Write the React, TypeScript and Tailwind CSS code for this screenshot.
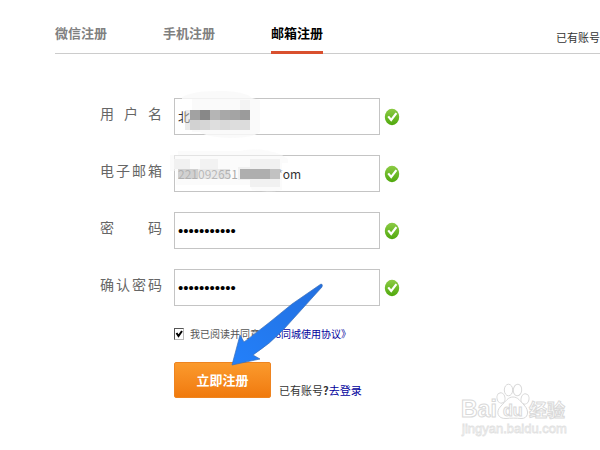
import type { ReactNode } from "react"

const tabs = [
  { label: "微信注册", active: false },
  { label: "手机注册", active: false },
  { label: "邮箱注册", active: true },
]

function CheckIcon() {
  return (
    <svg viewBox="0 0 16 18" className="h-[18px] w-4 shrink-0" aria-hidden="true">
      <defs>
        <linearGradient id="ok" x1="0" y1="0" x2="0" y2="1">
          <stop offset="0" stopColor="#8ccb45" />
          <stop offset="1" stopColor="#4fa80c" />
        </linearGradient>
      </defs>
      <ellipse cx="8" cy="9" rx="7.2" ry="8.2" fill="url(#ok)" />
      <path
        d="M4.2 8.4 L7.2 12 L12.4 5.2"
        fill="none"
        stroke="#fff"
        strokeWidth="2.2"
      />
    </svg>
  )
}

function NameMosaic() {
  const top = ["#a2a2a2", "#888888", "#b5b5b5", "#a8a8a8", "#a4a4a4", "#9b9b9b"]
  const bottom = ["#d2d2d2", "#d6d6d6", "#dedede", "#d9d9d9", "#dddddd", "#dcdcdc"]
  return (
    <svg
      viewBox="0 0 100 52"
      className="pointer-events-none absolute -top-2 left-0 h-[52px] w-[100px]"
      aria-hidden="true"
    >
      <path
        d="M8 7 Q20 0 50 1 Q72 2 78 8 L86 10 V42 Q80 48 56 48 Q32 47 26 42 H18 V9 H8 Z"
        fill="#f9f9f9"
        fillOpacity="0.85"
      />
      <rect x="66" y="10" width="10" height="10" fill="#f3f3f3" />
      {top.map((color, i) => (
        <rect key={i} x={16 + i * 10} y="20" width="10" height="10" fill={color} />
      ))}
      {bottom.map((color, i) => (
        <rect key={i} x={16 + i * 10} y="30" width="10" height="10" fill={color} />
      ))}
      <rect x="11" y="20" width="5" height="20" fill="#d8d8d8" fillOpacity="0.5" />
    </svg>
  )
}

function MailMosaic() {
  return (
    <svg
      viewBox="0 0 130 50"
      className="pointer-events-none absolute -top-2 -left-1 h-[50px] w-[130px]"
      aria-hidden="true"
    >
      <path
        d="M0 8 H8 V4 H70 Q90 -1 112 8 L118 12 V16 H112 V43 Q98 46 82 43 L80 38 H6 V24 H0 Z"
        fill="#f8f8f8"
        fillOpacity="0.6"
      />
      <rect x="4" y="12" width="16" height="10" fill="#f1f1f1" />
      <rect x="30" y="12" width="18" height="10" fill="#f2f2f2" />
      <rect x="80" y="12" width="30" height="28" fill="#f1f1f1" />
      <rect x="8" y="22" width="20" height="10" fill="#b5b5b5" fillOpacity="0.6" />
      <rect x="28" y="22" width="22" height="10" fill="#d0d0d0" fillOpacity="0.4" />
      <rect x="50" y="22" width="10" height="10" fill="#bbbbbb" fillOpacity="0.4" />
      <rect x="68" y="20" width="42" height="13" fill="#f1f1f1" />
      <rect x="70" y="22" width="30" height="10" fill="#aeaeae" />
      <rect x="100" y="22" width="10" height="10" fill="#c2c2c2" />
    </svg>
  )
}

type FieldProps = {
  id: string
  label: string
  type?: string
  value: string
  children?: ReactNode
}

function Field({ id, label, type = "text", value, children }: FieldProps) {
  return (
    <div className="flex items-center">
      <label
        htmlFor={id}
        className="mr-3 mb-2 w-[62px] text-justify text-sm text-[#666] [text-align-last:justify]"
      >
        {label}
      </label>
      <div className="relative w-[206px]">
        <input
          id={id}
          type={type}
          defaultValue={value}
          className={
            type === "password"
              ? "block h-[37px] w-full border border-[#c4c4c4] bg-white px-[3px] font-['Liberation_Sans',sans-serif] text-[15px] text-black outline-none"
              : "block h-[37px] w-full border border-[#c4c4c4] bg-white px-[3px] text-xs text-[#333] outline-none"
          }
        />
        {children}
      </div>
      <div className="ml-1">
        <CheckIcon />
      </div>
    </div>
  )
}

function Arrow() {
  return (
    <svg
      viewBox="0 0 96 86"
      className="pointer-events-none absolute -top-6 left-14 h-[86px] w-24"
      aria-hidden="true"
    >
      <defs>
        <linearGradient id="arrow" x1="0" y1="1" x2="1" y2="0">
          <stop offset="0" stopColor="#2380fa" />
          <stop offset="1" stopColor="#2370e0" />
        </linearGradient>
      </defs>
      <path
        d="M91 2 Q93 2 92 5 L54 47 Q40 62 23 73 L30 77 L2 83 L10 53 L14 60 Q38 42 62 22 Z"
        fill="url(#arrow)"
        stroke="#3b6fb8"
        strokeWidth="0.7"
      />
    </svg>
  )
}

function Watermark() {
  return (
    <svg
      viewBox="0 0 112 60"
      className="h-[60px] w-28 font-['Liberation_Sans','Noto_Sans_CJK_SC',sans-serif]"
      role="img"
      aria-label="Baidu 经验"
    >
      <g fill="#fff" stroke="#d9d9d9" strokeWidth="1">
        <text x="1" y="35" fontSize="23" fontWeight="700">
          Bai
        </text>
        <ellipse cx="41" cy="16" rx="4" ry="5.2" transform="rotate(-12 41 16)" />
        <ellipse cx="48.5" cy="8" rx="4.2" ry="5.8" />
        <ellipse cx="57.5" cy="8" rx="4.2" ry="5.8" transform="rotate(6 57.5 8)" />
        <ellipse cx="65" cy="17" rx="4" ry="5.2" transform="rotate(12 65 17)" />
        <path d="M53 15 C58 15 60 19 64 23 C70 29 68 37 61 36.500 C57 36 50 36 46 36.500 C38 37 35 30 41 24 C46 19 48 15 53 15 Z" />
        <text x="43" y="34" fontSize="16" fontWeight="700">
          du
        </text>
        <text x="69" y="35" fontSize="18" fontWeight="700">
          经验
        </text>
      </g>
      <text
        x="2"
        y="51"
        fontSize="13"
        fill="#fff"
        stroke="#e2e2e2"
        strokeWidth="0.8"
      >
        jingyan.baidu.com
      </text>
    </svg>
  )
}

export default function App() {
  return (
    <div className="min-h-screen overflow-hidden bg-white font-['Noto_Sans_CJK_SC',sans-serif]">
      <header className="ml-[55px] flex items-end justify-between border-b border-[#ccc] pt-[23px]">
        <nav className="flex gap-14">
          {tabs.map((tab) => (
            <a
              key={tab.label}
              href="#"
              className={
                tab.active
                  ? "-mb-px border-b-3 border-[#d9502f] pb-2 text-[13px] leading-5 font-bold text-black"
                  : "-mb-px border-b-3 border-transparent pb-2 text-[13px] leading-5 font-bold text-[#808080]"
              }
            >
              {tab.label}
            </a>
          ))}
        </nav>
        <span className="pb-2 text-[11px] leading-4 text-[#333]">已有账号</span>
      </header>

      <form className="pt-11 pl-[100px]" onSubmit={(e) => e.preventDefault()}>
        <div className="flex flex-col gap-5">
          <Field id="username" label="用户名" value="北">
            <NameMosaic />
          </Field>
          <Field id="email" label="电子邮箱" value="221092651********om">
            <MailMosaic />
          </Field>
          <Field id="password" label="密码" type="password" value="12345678901" />
          <Field id="confirm" label="确认密码" type="password" value="12345678901" />
        </div>

        <div className="relative ml-[74px]">
          <div className="flex items-center pt-5 text-[10px] leading-4">
            <span className="relative mr-1.5 flex">
              <input
                id="agree"
                type="checkbox"
                defaultChecked
                className="peer h-3 w-[10px] appearance-none border border-[#555] border-r-[#bbb] border-b-[#bbb] bg-white"
              />
              <svg
                viewBox="0 0 10 12"
                className="pointer-events-none absolute inset-0 hidden h-3 w-[10px] peer-checked:block"
                aria-hidden="true"
              >
                <path d="M2.5 5 L4.5 8 L8 3" fill="none" stroke="#000" strokeWidth="2" />
              </svg>
            </span>
            <label htmlFor="agree" className="text-[#555]">
              我已阅读并同意
            </label>
            <a href="#" className="text-[#00009c]">
              《58同城使用协议》
            </a>
          </div>
          <div className="mt-5 flex items-end gap-2">
            <button
              type="submit"
              className="h-9 w-[97px] rounded-xs border border-[#ee8420] bg-linear-to-b from-[#fb9a2c] to-[#f07a0c] text-[13px] font-bold text-white"
            >
              立即注册
            </button>
            <p className="text-[11px] leading-4 text-[#333]">
              已有账号<b>?</b>
              <a href="#" className="text-[#00009c]">
                去登录
              </a>
            </p>
          </div>
          <Arrow />
        </div>
      </form>

      <footer className="-mt-4 flex justify-end pr-7">
        <Watermark />
      </footer>
    </div>
  )
}
